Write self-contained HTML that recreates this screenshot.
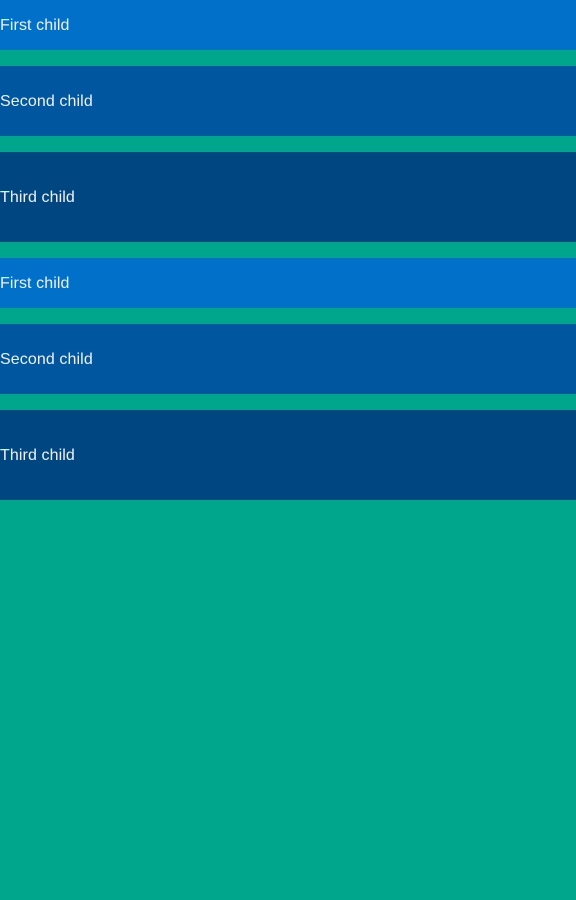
<!DOCTYPE html>
<html><head><style>
html,body{margin:0;padding:0;background:#00a68b;width:576px;height:900px;overflow:hidden}
.b{display:flex;align-items:center;box-sizing:border-box;padding-top:2px;color:#f0f0f0;font-family:"Liberation Sans",sans-serif;font-size:16px;letter-spacing:0.1px;margin-bottom:16px}
.a{height:50px;background:#0070c9}
.s{height:70px;background:#00569f}
.t{height:90px;background:#004680}
</style></head><body>
<div class="b a">First child</div>
<div class="b s">Second child</div>
<div class="b t">Third child</div>
<div class="b a">First child</div>
<div class="b s">Second child</div>
<div class="b t">Third child</div>
</body></html>
